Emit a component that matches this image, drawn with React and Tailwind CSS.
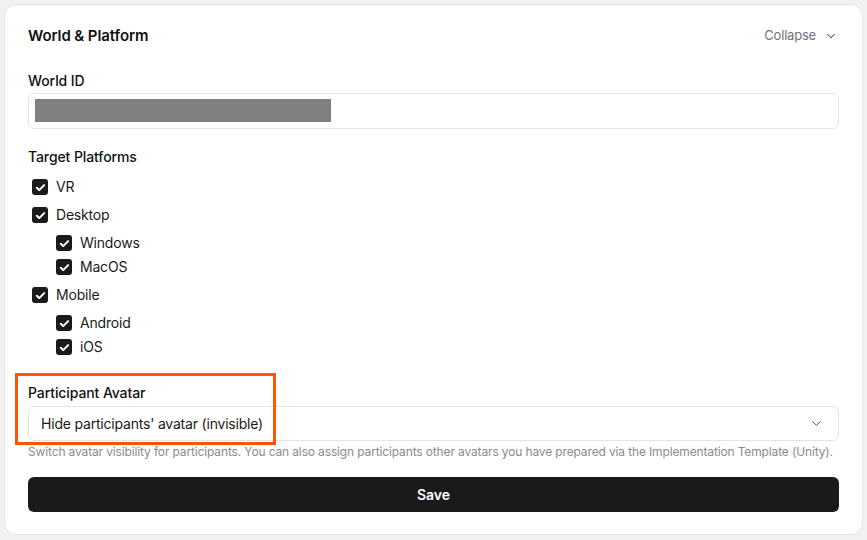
import { ChevronDown } from 'lucide-react';

const font = { fontFamily: "Inter, 'Noto Sans', sans-serif" };

function Check({ label }) {
  return (
    <label className="flex items-center gap-2 h-5 text-sm tracking-[-0.2px] text-[#1a1a1a]">
      <span className="w-4 h-4 rounded-[3px] bg-[#1a1a1a] flex items-center justify-center">
        <svg width="11" height="11" viewBox="0 0 12 12" fill="none">
          <path d="M2 6.3l2.6 2.6L10 3.4" stroke="white" strokeWidth="2.2" strokeLinecap="round" strokeLinejoin="round" />
        </svg>
      </span>
      {label}
    </label>
  );
}

function Group({ label, items }) {
  return (
    <div>
      <Check label={label} />
      <div className="mt-2 pl-6 flex flex-col gap-1">
        {items.map((i) => <Check key={i} label={i} />)}
      </div>
    </div>
  );
}

export default function App() {
  return (
    <div className="w-[867px] h-[540px] bg-[#f2f2f3] p-1" style={font}>
      <div className="h-[531px] bg-white border border-[#e4e4e7] rounded-xl px-[23px] pt-5 pb-6">
        <div className="flex items-center justify-between h-[22px]">
          <h3 className="text-[15px] font-semibold text-[#111] tracking-[-0.1px]">World &amp; Platform</h3>
          <button className="flex items-center gap-2 text-[13px] text-[#71717a] tracking-[-0.2px] pr-[1px]">
            Collapse
            <ChevronDown size={14} strokeWidth={1.8} className="text-[#52525b]" />
          </button>
        </div>

        <div className="mt-[22px] text-sm font-medium text-[#111] h-6 leading-6 tracking-[-0.1px]">World ID</div>
        <div className="h-9 border border-[#e4e4e7] rounded-md pl-[6px] pt-[5px]">
          <div className="w-[296px] h-[23px] bg-[#808083]" />
        </div>

        <div className="mt-[18px] text-sm font-medium text-[#111] h-5 leading-5 tracking-[-0.1px]">Target Platforms</div>
        <div className="mt-[10px] pl-1 flex flex-col gap-2">
          <Check label="VR" />
          <Group label="Desktop" items={['Windows', 'MacOS']} />
          <Group label="Mobile" items={['Android', 'iOS']} />
        </div>

        <div className="relative mt-[26px]">
          <div className="text-sm font-medium text-[#111] h-5 leading-5 tracking-[-0.1px]">Participant Avatar</div>
          <div className="mt-[3px] h-[35px] border border-[#e4e4e7] rounded-md flex items-center justify-between pl-3 pr-[14px]">
            <span className="text-sm text-[#1a1a1a] tracking-[-0.2px]">Hide participants' avatar (invisible)</span>
            <ChevronDown size={15} strokeWidth={1.6} className="text-[#52525b]" />
          </div>
          <div className="absolute -left-[13px] -top-[10px] w-[261px] h-[72px] border-[3px] border-[#ff5500]" />
        </div>
        <p className="mt-[3px] text-xs leading-4 text-[#8a8a8f] tracking-[-0.14px] whitespace-nowrap">
          Switch avatar visibility for participants. You can also assign participants other avatars you have prepared via the Implementation Template (Unity).
        </p>

        <button className="mt-[17px] w-full h-[35px] rounded-md bg-[#1a1a1a] text-white text-sm font-semibold">
          Save
        </button>
      </div>
    </div>
  );
}
